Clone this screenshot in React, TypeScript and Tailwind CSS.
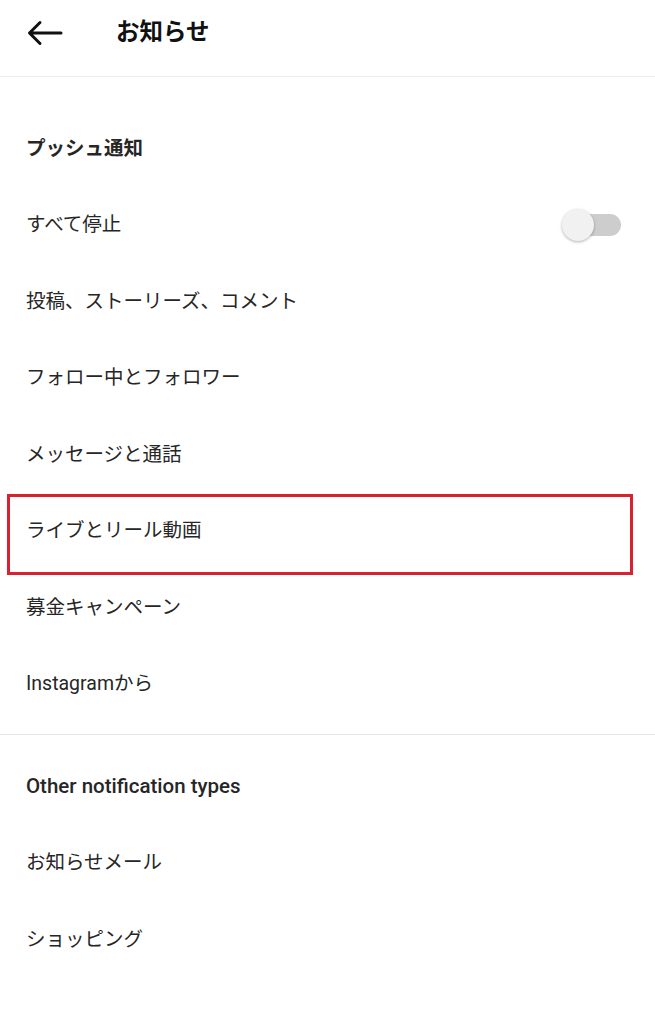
const pushItems = [
  'すべて停止',
  '投稿、ストーリーズ、コメント',
  'フォロー中とフォロワー',
  'メッセージと通話',
  'ライブとリール動画',
  '募金キャンペーン',
  'Instagramから',
];

const otherItems = ['お知らせメール', 'ショッピング'];

function Toggle() {
  return (
    <div className="relative w-[58px] h-[34px] flex items-center">
      <div className="ml-[3px] w-[54px] h-[22px] rounded-full bg-[#cdcdcd]" />
      <div className="absolute left-[-2px] top-[1px] w-[32px] h-[32px] rounded-full bg-[#f1f1f1] shadow-[0_1px_3px_rgba(0,0,0,0.3)]" />
    </div>
  );
}

function Row({ label, toggle, marked }: { label: string; toggle?: boolean; marked?: boolean }) {
  return (
    <div className="relative h-[76.5px] flex items-center justify-between pl-[26px] pr-[33px]">
      <span className="text-[19.5px] text-[#262626]">{label}</span>
      {toggle && <Toggle />}
      {/* annotation box */}
      {marked && (
        <div className="absolute left-[7px] top-[1px] w-[626px] h-[81px] border-[3px] border-[#d9222e] pointer-events-none" />
      )}
    </div>
  );
}

export default function App() {
  return (
    <div
      className="w-[655px] min-h-[1024px] bg-white"
      style={{ fontFamily: 'Roboto, "Noto Sans CJK JP", sans-serif' }}
    >
      <header className="h-[77px] flex items-center border-b border-[#ececec]">
        <svg width="36" height="26" viewBox="0 0 36 26" className="ml-[27px] mb-[10px]" fill="none" stroke="#111" strokeWidth="3" strokeLinecap="round" strokeLinejoin="round">
          <path d="M34 13H3M13 2.5L2.5 13L13 23.5" />
        </svg>
        <h1 className="ml-[53px] mb-[10px] text-[23.5px] font-bold text-[#111]">お知らせ</h1>
      </header>

      <section className="pt-[33px] pb-[12px]">
        <div className="h-[76.5px] flex items-center pl-[26px]">
          <h2 className="text-[19.5px] font-bold text-[#262626]">プッシュ通知</h2>
        </div>
        {pushItems.map((item, i) => (
          <Row key={item} label={item} toggle={i === 0} marked={item === 'ライブとリール動画'} />
        ))}
      </section>

      <div className="border-t border-[#e6e6e6]" />

      <section className="pt-[13px]">
        <div className="h-[76.5px] flex items-center pl-[26px]">
          <h2 className="text-[20.5px] font-medium text-[#262626]">Other notification types</h2>
        </div>
        {otherItems.map((item) => (
          <Row key={item} label={item} />
        ))}
      </section>
    </div>
  );
}
